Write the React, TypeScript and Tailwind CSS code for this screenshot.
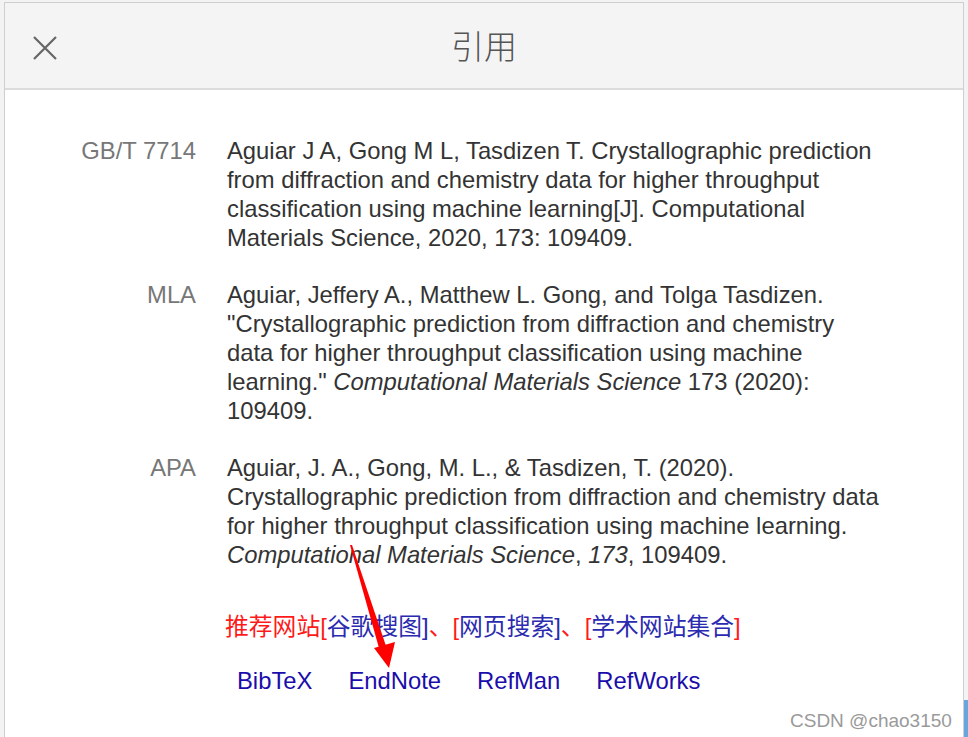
import { ReactNode } from "react";

interface CitationRowProps {
  label: string;
  children: ReactNode;
}

function CitationRow({ label, children }: CitationRowProps) {
  return (
    <div className="flex">
      <div className="w-[193px] shrink-0 pr-[2px] text-right text-[#777]">{label}</div>
      <div className="ml-[29px] w-[659px] text-[#333]">{children}</div>
    </div>
  );
}

export default function App() {
  return (
    <div className="relative h-[737px] w-[968px] overflow-hidden bg-[#f3f3f3] font-['Liberation_Sans','Noto_Sans_CJK_SC',sans-serif]">
      {/* dialog */}
      <div className="ml-[4px] mt-[2px] h-[760px] w-[960px] border border-[#cfcfcf] bg-white">
        <div className="relative flex h-[87px] items-center justify-center border-b-2 border-[#dcdcdc] bg-[#f4f4f4]">
          <svg
            className="absolute left-[27px] top-[32px]"
            width="26"
            height="26"
            viewBox="0 0 26 26"
            fill="none"
            stroke="#666"
            strokeWidth="2.2"
          >
            <path d="M2 2L24 24M24 2L2 24" />
          </svg>
          <span className="font-['Noto_Sans_CJK_SC',sans-serif] text-[33px] font-light text-[#555]">引用</span>
        </div>

        <div className="flex flex-col gap-[28px] pt-[46px] text-[23.8px] leading-[29px]">
          <CitationRow label="GB/T 7714">
            Aguiar J A, Gong M L, Tasdizen T. Crystallographic prediction from diffraction and chemistry data for higher
            throughput classification using machine learning[J]. Computational Materials Science, 2020, 173: 109409.
          </CitationRow>
          <CitationRow label="MLA">
            Aguiar, Jeffery A., Matthew L. Gong, and Tolga Tasdizen. "Crystallographic prediction from diffraction and
            chemistry data for higher throughput classification using machine learning." <i>Computational Materials Science</i>{" "}
            173 (2020): 109409.
          </CitationRow>
          <CitationRow label="APA">
            Aguiar, J. A., Gong, M. L., &amp; Tasdizen, T. (2020). Crystallographic prediction from diffraction and chemistry
            data for higher throughput classification using machine learning. <i>Computational Materials Science</i>,{" "}
            <i>173</i>, 109409.
          </CitationRow>
        </div>

        <div className="ml-[220px] mt-[43px] text-[23.8px] leading-[29px]">
          <span className="text-[#ff1a1a]">推荐网站[</span>
          <span className="text-[#2b2bb0]">谷歌搜图]</span>
          <span className="text-[#ff1a1a]">、[</span>
          <span className="text-[#2b2bb0]">网页搜索]</span>
          <span className="text-[#ff1a1a]">、[</span>
          <span className="text-[#2b2bb0]">学术网站集合</span>
          <span className="text-[#ff1a1a]">]</span>
        </div>

        <div className="ml-[232px] mt-[25px] flex gap-[36px] text-[23.8px] leading-[29px] text-[#1a0dab]">
          <span>BibTeX</span>
          <span>EndNote</span>
          <span>RefMan</span>
          <span>RefWorks</span>
        </div>
      </div>

      {/* red annotation arrow */}
      <svg className="absolute left-0 top-0" width="968" height="737" viewBox="0 0 968 737">
        <polygon points="350,545 352,545 386,646 379,648" fill="#ff0000" />
        <polygon points="374,648 395,642 389,668" fill="#ff0000" />
      </svg>

      {/* blue strip behind dialog, bottom right */}
      <div className="absolute right-0 top-[700px] h-[37px] w-[4px] bg-[#6aa6de]" />

      <div className="absolute left-[790px] top-[707px] text-[19px] text-[#9a9a9a] [text-shadow:0_0_2px_#fff]">
        CSDN @chao3150
      </div>
    </div>
  );
}
